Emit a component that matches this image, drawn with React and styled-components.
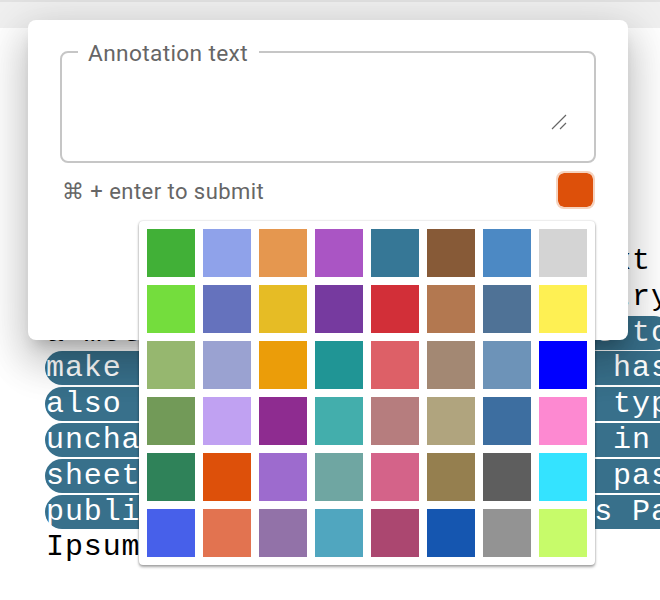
import React from 'react';
import styled, { createGlobalStyle } from 'styled-components';

const GlobalStyle = createGlobalStyle`
  html, body {
    margin: 0;
    padding: 0;
    width: 660px;
    height: 600px;
    overflow: hidden;
    background: #fff;
  }
`;

const Page = styled.div`
  position: relative;
  width: 660px;
  height: 600px;
  overflow: hidden;
`;

const TopBar = styled.div`
  height: 26px;
  background: #f0f0f0;
  border-top: 2px solid #e2e2e2;
`;

const Document = styled.div`
  padding: 216px 0 0 46px;
  font-family: 'Liberation Mono', monospace;
  font-size: 30px;
  letter-spacing: 0.9px;
  line-height: 35.8px;
  white-space: nowrap;
  color: #000;
`;

const Highlight = styled.span`
  background: #38708b;
  color: #fff;
  border-radius: 17px;
  padding: 0 1px;
  margin-left: -1px;
  -webkit-box-decoration-break: clone;
  box-decoration-break: clone;
`;

const Dialog = styled.div`
  position: absolute;
  left: 28px;
  top: 20px;
  width: 600px;
  height: 320px;
  box-sizing: border-box;
  padding: 17px 32px 0;
  background: #fff;
  border-radius: 8px;
  box-shadow: 0 11px 15px -7px rgba(0, 0, 0, 0.2), 0 24px 38px 3px rgba(0, 0, 0, 0.14),
    0 9px 46px 8px rgba(0, 0, 0, 0.12);
  font-family: Roboto, sans-serif;
  color: #666;
`;

const Field = styled.fieldset`
  position: relative;
  box-sizing: border-box;
  height: 126px;
  margin: 0;
  padding: 0 16px;
  border: 2px solid #c6c6c6;
  border-radius: 8px;
`;

const FieldLabel = styled.legend`
  padding: 4px 11px 0 10px;
  font-size: 22.7px;
  line-height: 26px;
  letter-spacing: 0.35px;
  color: #666;
`;

const Note = styled.textarea`
  display: block;
  box-sizing: border-box;
  width: 100%;
  height: 80px;
  border: 0;
  outline: 0;
  padding: 0;
  resize: none;
  background: transparent;
`;

const ResizeGrip = styled.svg`
  position: absolute;
  right: 26px;
  bottom: 30px;
  width: 17px;
  height: 17px;
`;

const Footer = styled.div`
  display: flex;
  align-items: center;
  justify-content: space-between;
  margin-top: 8px;
`;

const Hint = styled.span`
  padding: 4px 0 0 2px;
  font-size: 22px;
  line-height: 26px;
  letter-spacing: 0.45px;
  color: #666;
`;

const ColorButton = styled.button`
  box-sizing: border-box;
  width: 39px;
  height: 38px;
  margin-right: 1px;
  padding: 0;
  border: 2px solid #f5d3bf;
  border-radius: 8px;
  background: ${(p) => p.$color};
  background-clip: padding-box;
`;

const Palette = styled.div`
  position: absolute;
  left: 111px;
  top: 201px;
  display: grid;
  grid-template-columns: repeat(8, 48px);
  gap: 8px;
  padding: 8px;
  background: #fff;
  border-radius: 4px;
  box-shadow: 0 2px 3px rgba(0, 0, 0, 0.35), 0 0 2px rgba(0, 0, 0, 0.22);
`;

const Swatch = styled.div`
  width: 48px;
  height: 48px;
  background: ${(p) => p.$color};
`;

const colors = [
  '#41b037', '#8fa2ea', '#e5974f', '#aa55c4', '#367796', '#875a37', '#4c89c4', '#d4d4d4',
  '#74dd3d', '#6572bd', '#e6bc25', '#763a9f', '#d22f38', '#b37850', '#4f7296', '#fef053',
  '#96b76f', '#9aa2d1', '#eb9d09', '#209595', '#dd6067', '#a38873', '#6d93b8', '#0000ff',
  '#729a58', '#c0a1f2', '#8e2c90', '#43aeac', '#b67d7e', '#b0a47e', '#3d6ea0', '#fd89d1',
  '#2f8259', '#dd500a', '#9d6bce', '#6fa6a2', '#d46389', '#957f4f', '#5e5e5e', '#34e3ff',
  '#4760ea', '#e27350', '#9272a8', '#50a6bf', '#ab4770', '#1556b0', '#939393', '#c7fb6a',
];

export default function App() {
  return (
    <Page>
      <GlobalStyle />
      <TopBar />
      <Document>
        Lorem Ipsum is simply dummy text of the
        <br />
        printing and typesetting industry. Lorem Ipsum has been the
        <br />
        a metal font, and <Highlight>
          scrambled it to
          <br />
          make a type specimen book. It has survived not only five centuries, but
          <br />
          also the leap into electronic typesetting, remaining essentially
          <br />
          unchanged. It was popularised in the 1960s with the release of Letraset
          <br />
          sheets containing Lorem Ipsum passages, and more recently with desktop
          <br />
          publishing software like Aldus PageMaker including versions of Lorem
        </Highlight>
        <br />
        Ipsum.
      </Document>
      <Dialog>
        <Field>
          <FieldLabel>Annotation text</FieldLabel>
          <Note />
          <ResizeGrip viewBox="0 0 17 17">
            <path d="M1 15 L15 1 M9 15 L15 9" stroke="#666" strokeWidth="1.2" fill="none" />
          </ResizeGrip>
        </Field>
        <Footer>
          <Hint>⌘ + enter to submit</Hint>
          <ColorButton $color="#dd500a" />
        </Footer>
        <Palette>
          {colors.map((color) => (
            <Swatch key={color} $color={color} />
          ))}
        </Palette>
      </Dialog>
    </Page>
  );
}
